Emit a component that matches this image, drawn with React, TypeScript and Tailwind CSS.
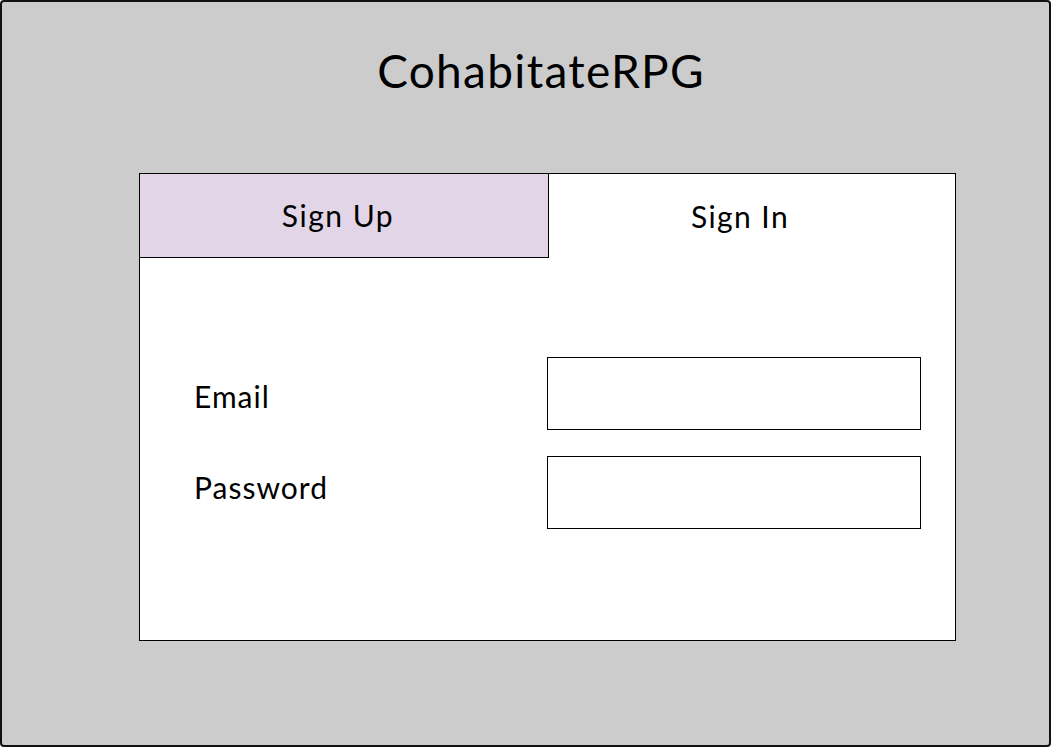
import React from "react";

function App() {
  const [tab, setTab] = React.useState<"up" | "in">("up");

  return (
    <div
      className="w-[1051px] h-[747px] bg-[#cccccc] border-2 border-[#111] rounded-[4px] flex flex-col text-black"
      style={{ fontFamily: "Lato, 'Noto Sans', sans-serif" }}
    >
      <header className="h-[171px] pt-[40px] flex justify-center">
        <h1 className="text-[46px] leading-[58px] font-normal pl-[31px] tracking-[1.3px]">
          CohabitateRPG
        </h1>
      </header>

      <div className="ml-[137px] w-[817px] h-[468px] bg-white border border-black flex flex-col">
        <div className="flex h-[84px]">
          <button
            onClick={() => setTab("up")}
            className="w-[409px] h-[84px] bg-[#e1d5e7] border-r border-b border-black text-[30px] tracking-[1.5px] pr-[12px]"
          >
            Sign Up
          </button>
          <button
            onClick={() => setTab("in")}
            className="flex-1 h-[84px] text-[30px] tracking-[1.4px] pr-[24px]"
          >
            Sign In
          </button>
        </div>

        <div className="flex pt-[99px] pr-[34px]">
          <div className="w-[407px] pl-[54px] pt-[22px] flex flex-col gap-[57px] text-[30px] leading-[34px] tracking-[1px]">
            <label>Email</label>
            <label>Password</label>
          </div>
          <div className="flex-1 flex flex-col gap-[26px]">
            <input
              type="email"
              className="h-[73px] border border-black bg-white outline-none"
            />
            <input
              type="password"
              className="h-[73px] border border-black bg-white outline-none"
            />
          </div>
        </div>
      </div>
    </div>
  );
}

export default App;
